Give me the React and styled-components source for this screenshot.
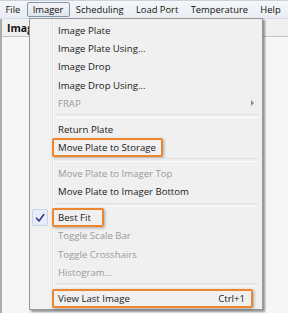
import React from 'react';
import styled, { createGlobalStyle } from 'styled-components';

const Global = createGlobalStyle`
  html, body { margin: 0; padding: 0; background: #f0f0f0; }
  body { font-family: "Open Sans", "Noto Sans", "DejaVu Sans", sans-serif; }
  * { box-sizing: border-box; }
`;

const Window = styled.div`
  position: relative;
  width: 288px;
  height: 313px;
  overflow: hidden;
  background: #f0f0f0;
  display: flex;
  flex-direction: column;
`;

const MenuBar = styled.div`
  height: 19px;
  display: flex;
  align-items: center;
  background: linear-gradient(#f4f6f9, #e9edf2);
  border-top: 1px solid #c9d1dc;
  border-bottom: 1px solid #d6dce4;
`;

const MenuTitle = styled.div`
  height: 15px;
  line-height: 13px;
  padding: 0 5.2px;
  font-size: 9.4px;
  color: #111;
  border: 1px solid ${p => (p.$active ? '#8595a8' : 'transparent')};
  border-radius: 2px;
  background: ${p => (p.$active ? 'linear-gradient(#f3f5f8, #dfe5ed)' : 'transparent')};
  white-space: nowrap;
  &:first-child { padding-left: 4.5px; }
`;

const Body = styled.div`
  flex: 1;
  border-left: 2px solid #a8adb4;
  background: #f6f6f6;
`;

const HeaderRow = styled.div`
  height: 18px;
  line-height: 18px;
  padding-left: 5px;
  font-size: 10.5px;
  font-weight: bold;
  color: #111;
  background: #f0f0f0;
  border-bottom: 1px solid #c4c4c4;
`;

const Dropdown = styled.div`
  position: absolute;
  left: 29px;
  top: 18px;
  width: 234px;
  height: 292px;
  border: 1px solid #979797;
  padding: 2px;
  background: linear-gradient(to right, #f1f1f1 0 22px, #e3e3e3 22px 23px, #fbfbfb 23px 24px, #f0f0f0 24px);
  box-shadow: 2px 2px 2px rgba(0, 0, 0, 0.4);
  display: flex;
  flex-direction: column;
`;

const Item = styled.div`
  height: 18.3px;
  flex: none;
  display: flex;
  align-items: stretch;
  font-size: 9.6px;
  color: ${p => (p.$disabled ? '#9a9a9a' : '#1a1a1a')};
`;

const Gutter = styled.div`
  width: 20px;
  flex: none;
  display: flex;
  align-items: center;
`;

const CheckBox = styled.div`
  width: 16px;
  height: 17px;
  border: 1px solid #c9d2e6;
  border-radius: 2px;
  background: #e8edf8;
  display: flex;
  align-items: center;
  justify-content: center;
`;

const Label = styled.div`
  display: flex;
  align-items: center;
  flex: ${p => (p.$grow ? 1 : 'none')};
  margin-right: ${p => p.$mr || 0}px;
  padding-left: 4px;
  padding-right: ${p => p.$padRight || 4}px;
  border: 2px solid ${p => (p.$hl ? '#ee8630' : 'transparent')};
  border-radius: 2px;
  box-shadow: ${p => (p.$hl ? '1px 1px 3px rgba(0,0,0,0.3)' : 'none')};
  white-space: nowrap;
`;

const Shortcut = styled.span`
  margin-left: auto;
`;

const Arrow = styled.span`
  margin-left: auto;
  align-self: center;
  width: 0;
  height: 0;
  border-top: 3px solid transparent;
  border-bottom: 3px solid transparent;
  border-left: 3px solid #8a8a8a;
`;

const Separator = styled.div`
  height: 7.6px;
  flex: none;
  display: flex;
  align-items: center;
  padding-left: 24px;
  padding-right: 2px;
  &::after {
    content: '';
    flex: 1;
    height: 2px;
    border-top: 1px solid #dfdfdf;
    border-bottom: 1px solid #fafafa;
  }
`;

const Check = () => (
  <svg width="10" height="10" viewBox="0 0 10 10">
    <path d="M1.5 5.2 L4 8 L8.8 1.5" fill="none" stroke="#2a3b8f" strokeWidth="1.6" strokeLinecap="round" strokeLinejoin="round" />
  </svg>
);

const menuTitles = ['File', 'Imager', 'Scheduling', 'Load Port', 'Temperature', 'Help'];

const entries = [
  { t: 'Image Plate' },
  { t: 'Image Plate Using...' },
  { t: 'Image Drop' },
  { t: 'Image Drop Using...' },
  { t: 'FRAP', disabled: true, sub: true },
  { sep: true },
  { t: 'Return Plate' },
  { t: 'Move Plate to Storage', hl: true, pr: 5 },
  { sep: true },
  { t: 'Move Plate to Imager Top', disabled: true },
  { t: 'Move Plate to Imager Bottom' },
  { sep: true },
  { t: 'Best Fit', hl: true, checked: true, pr: 11 },
  { t: 'Toggle Scale Bar', disabled: true },
  { t: 'Toggle Crosshairs', disabled: true },
  { t: 'Histogram...', disabled: true },
  { sep: true },
  { t: 'View Last Image', hl: true, full: true, shortcut: 'Ctrl+1', pr: 6 },
];

export default function App() {
  return (
    <Window>
      <Global />
      <MenuBar>
        {menuTitles.map(m => (
          <MenuTitle key={m} $active={m === 'Imager'}>{m}</MenuTitle>
        ))}
      </MenuBar>
      <Body>
        <HeaderRow>Imager</HeaderRow>
      </Body>
      <Dropdown>
        {entries.map((e, i) =>
          e.sep ? (
            <Separator key={i} />
          ) : (
            <Item key={i} $disabled={e.disabled}>
              <Gutter>{e.checked && <CheckBox><Check /></CheckBox>}</Gutter>
              <Label
                $hl={e.hl}
                $grow={e.full || e.sub}
                $mr={e.full ? 7 : 0}
                $padRight={e.sub ? 4 : e.pr}
              >
                {e.t}
                {e.shortcut && <Shortcut>{e.shortcut}</Shortcut>}
                {e.sub && <Arrow />}
              </Label>
            </Item>
          )
        )}
      </Dropdown>
    </Window>
  );
}
